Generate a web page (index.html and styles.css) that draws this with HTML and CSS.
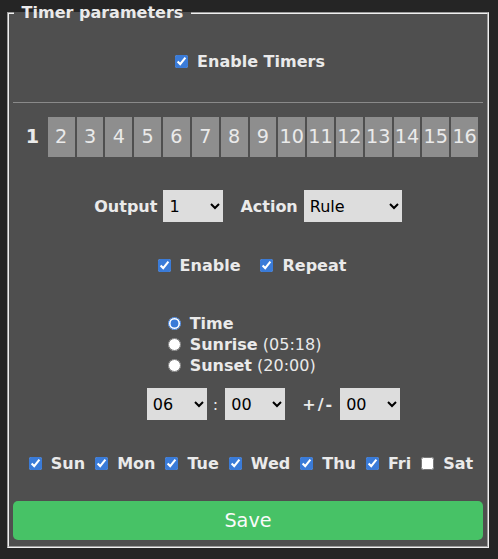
FILE: index.html
```html
<!DOCTYPE html>
<html lang="en">
<head>
<meta charset="UTF-8">
<meta name="viewport" content="width=device-width, initial-scale=1.0">
<title>Timer parameters</title>
<link rel="stylesheet" href="styles.css">
</head>
<body>
<fieldset class="timer">
    <legend class="timer-title">&nbsp;Timer parameters&nbsp;</legend>
    <div class="row row-master">
        <label class="check"><input type="checkbox" checked><b>Enable Timers</b></label>
    </div>
    <div class="rule"></div>
    <div class="tabs">
        <button class="tab active">1</button>
        <button class="tab">2</button>
        <button class="tab">3</button>
        <button class="tab">4</button>
        <button class="tab">5</button>
        <button class="tab">6</button>
        <button class="tab">7</button>
        <button class="tab">8</button>
        <button class="tab">9</button>
        <button class="tab">10</button>
        <button class="tab">11</button>
        <button class="tab">12</button>
        <button class="tab">13</button>
        <button class="tab">14</button>
        <button class="tab">15</button>
        <button class="tab">16</button>
    </div>
    <div class="row row-output">
        <b>Output</b>
        <select class="sel sel-out"><option>1</option></select>
        <b class="lbl-action">Action</b>
        <select class="sel sel-action"><option>Rule</option></select>
    </div>
    <div class="row row-flags">
        <label class="check"><input type="checkbox" checked><b>Enable</b></label>
        <label class="check"><input type="checkbox" checked><b>Repeat</b></label>
    </div>
    <div class="modes">
        <div class="modes-list">
            <label class="check"><input type="radio" name="mode" checked><span><b>Time</b></span></label>
            <label class="check"><input type="radio" name="mode"><span><b>Sunrise</b> (05:18)</span></label>
            <label class="check"><input type="radio" name="mode"><span><b>Sunset</b> (20:00)</span></label>
        </div>
    </div>
    <div class="row row-time">
        <select class="sel"><option>06</option></select>
        <span class="colon">:</span>
        <select class="sel"><option>00</option></select>
        <b class="plusminus">+/-</b>
        <select class="sel"><option>00</option></select>
    </div>
    <div class="row row-days">
        <label class="check"><input type="checkbox" checked><b>Sun</b></label>
        <label class="check"><input type="checkbox" checked><b>Mon</b></label>
        <label class="check"><input type="checkbox" checked><b>Tue</b></label>
        <label class="check"><input type="checkbox" checked><b>Wed</b></label>
        <label class="check"><input type="checkbox" checked><b>Thu</b></label>
        <label class="check"><input type="checkbox" checked><b>Fri</b></label>
        <label class="check"><input type="checkbox"><b>Sat</b></label>
    </div>
    <button class="save">Save</button>
</fieldset>
</body>
</html>
```

FILE: styles.css
```css
body {
    margin: 0;
    padding: 3px 0 0;
    background: #252525;
    color: #eaeaea;
    font: 16px/21px "DejaVu Sans", Verdana, sans-serif;
}
.timer {
    margin: 0 9px 0 7px;
    padding: 0 4px 6px;
    background: #4f4f4f;
    border: 2px groove #f0f0f0;
}
.timer-title {
    margin-left: 1px;
    padding: 0 2px;
    font-weight: bold;
    line-height: 19px;
}
.row {
    display: flex;
    justify-content: center;
    align-items: center;
}
.check {
    display: inline-flex;
    align-items: center;
    gap: 9px;
}
.check input {
    margin: 0;
    accent-color: #3a7bd8;
}
.row-master {
    margin-top: 29px;
    padding-left: 4px;
}
.rule {
    margin-top: 30px;
    border-top: 1px solid #8a8a8a;
}
.tabs {
    display: grid;
    grid-template-columns: repeat(16, 1fr);
    gap: 2px;
    margin: 14px 5px 0 6px;
}
.tab {
    height: 40px;
    padding: 0;
    border: 0;
    border-radius: 0;
    background: #8e8e8e;
    color: #eaeaea;
    font: 19.2px/40px "DejaVu Sans", Verdana, sans-serif;
}
.tab.active {
    background: none;
    font-weight: bold;
}
.row-output {
    margin-top: 33px;
    height: 32px;
    gap: 6px;
}
.lbl-action {
    margin-left: 11px;
}
.sel {
    width: 60px;
    height: 32px;
    padding: 0 0 0 2px;
    border: 0;
    border-radius: 0;
    background: #dddddd;
    color: #000;
    font: 16px "DejaVu Sans", Verdana, sans-serif;
}
.sel-action {
    width: 98px;
}
.row-flags {
    margin-top: 33px;
    gap: 20px;
    padding-left: 8px;
}
.modes {
    margin-top: 37px;
    text-align: center;
}
.modes-list {
    display: inline-flex;
    flex-direction: column;
    align-items: flex-start;
    margin-left: -7px;
}
.row-time {
    margin-top: 12px;
    height: 32px;
    padding-left: 51px;
}
.colon {
    margin: 0 7px 0 6px;
}
.plusminus {
    margin: 0 6px 0 17px;
    letter-spacing: 2px;
}
.row-days {
    margin-top: 33px;
    gap: 10px;
    padding-left: 6px;
}
.save {
    display: block;
    width: 100%;
    height: 39px;
    margin-top: 27px;
    padding: 0;
    border: 0;
    border-radius: 5px;
    background: #47c266;
    color: #fafafa;
    font: 19.2px/39px "DejaVu Sans", Verdana, sans-serif;
}
```
